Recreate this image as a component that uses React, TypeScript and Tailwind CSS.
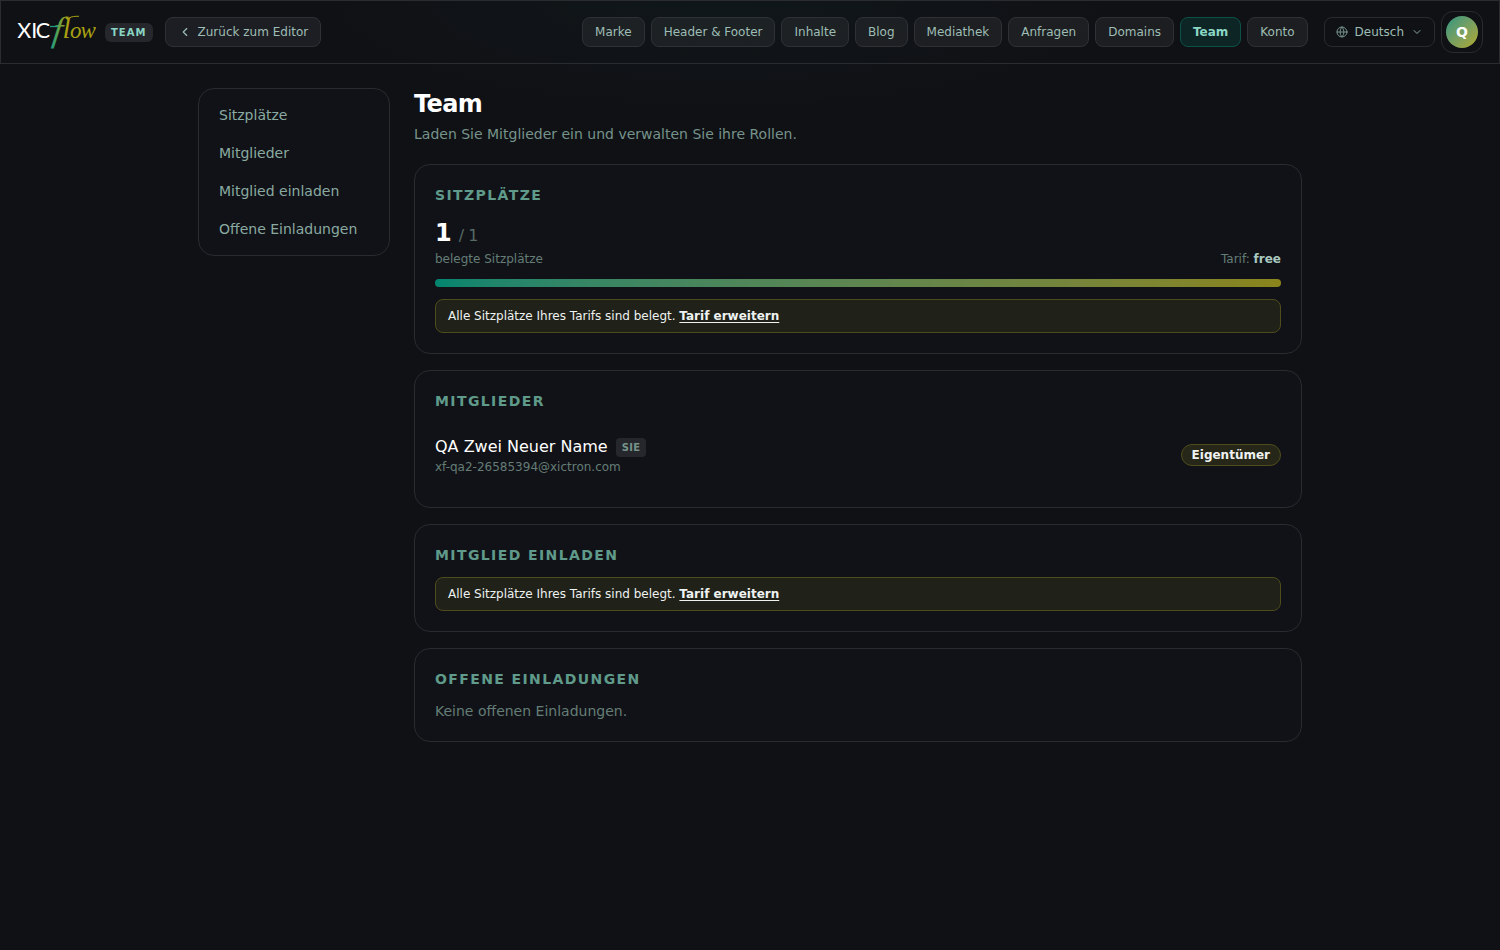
import type { ReactNode } from "react"
import { ChevronDown, ChevronLeft, Globe } from "lucide-react"

const navItems = [
  "Marke",
  "Header & Footer",
  "Inhalte",
  "Blog",
  "Mediathek",
  "Anfragen",
  "Domains",
  "Team",
  "Konto",
]

const sections = ["Sitzplätze", "Mitglieder", "Mitglied einladen", "Offene Einladungen"]

function Logo() {
  return (
    <svg width="80" height="34" viewBox="0 0 80 34" aria-label="XICflow" className="shrink-0 overflow-visible">
      <defs>
        <linearGradient id="flow" gradientUnits="userSpaceOnUse" x1="-3" y1="-4" x2="17" y2="-10">
          <stop offset="0" stopColor="#1f9d80" />
          <stop offset="0.5" stopColor="#5fa24a" />
          <stop offset="1" stopColor="#a8a012" />
        </linearGradient>
      </defs>
      <text x="1.3 15.3 19.7" y="23" fontFamily="Lato, sans-serif" fontSize="21.500" fill="#ffffff">
        XIC
      </text>
      <g fontFamily="'Liberation Serif', serif" fontStyle="italic">
        <text transform="translate(35.5 25.5) skewX(-8)" fontSize="35" fill="url(#flow)">
          f
        </text>
        <text x="46.500 54 64.500" y="23" fill="#a8a012">
          <tspan fontSize="29">l</tspan>
          <tspan fontSize="23">ow</tspan>
        </text>
      </g>
      {/* crossbar of the f runs back to the C, the swash reaches over the l */}
      <path d="M34 11.500H42" stroke="#1f9d80" strokeWidth="1.300" />
      <path d="M53 3C55.500 1.500 59 1.200 63 1.300" fill="none" stroke="#a8a012" strokeWidth="1" />
    </svg>
  )
}

function Card({ title, children }: { title: string; children: ReactNode }) {
  return (
    <section className="rounded-2xl border border-[#2a2b2f] bg-[#111217] p-5">
      <h2 className="mb-3 text-sm font-bold uppercase tracking-[1.4px] text-[#5f9a8a]">{title}</h2>
      {children}
    </section>
  )
}

function SeatsNotice() {
  return (
    <div className="rounded-lg border border-[#4f4c1c] bg-[#202118] px-3 py-2 text-xs text-[#eef2f1]">
      Alle Sitzplätze Ihres Tarifs sind belegt.{" "}
      <a href="#" className="font-bold underline underline-offset-2">
        Tarif erweitern
      </a>
    </div>
  )
}

function Header() {
  return (
    <header className="flex h-16 items-center justify-between border border-[#2b2c30] pl-[15px] pr-4">
      <div className="flex items-center">
        <Logo />
        <span className="ml-[9px] rounded-md bg-[#26272c] px-1.5 py-0.5 text-[10px] font-bold leading-[15px] tracking-[1.05px] text-[#8ad6c4]">
          TEAM
        </span>
        <button className="ml-3 flex items-center gap-1.5 rounded-lg border border-[#303136] bg-[#1d1e23] px-3 py-1.5 text-xs text-[#9dbdb4]">
          <ChevronLeft size={14} />
          Zurück zum Editor
        </button>
      </div>
      <div className="flex items-center">
        <nav className="flex gap-1.5">
          {navItems.map((item) => (
            <button
              key={item}
              className={
                item === "Team"
                  ? "rounded-lg border border-[#0b5148] bg-[#0e2526] px-3 py-1.5 text-xs font-bold text-[#8ad6c4]"
                  : "rounded-lg border border-[#303136] bg-[#fff]/[0.055] px-3 py-1.5 text-xs text-[#9dbdb4]"
              }
            >
              {item}
            </button>
          ))}
        </nav>
        <button className="ml-4 flex items-center rounded-lg border border-[#2a2b2f] px-[11px] py-1.5 text-xs text-[#9dbdb4]">
          <Globe size={12} strokeWidth={2} className="mr-[7px] text-[#76938b]" />
          Deutsch
          <ChevronDown size={12} strokeWidth={2} className="ml-[7px] text-[#8aa79f]" />
        </button>
        <button className="ml-1.5 rounded-xl border border-[#2a2b2f] p-1">
          <span className="flex size-8 items-center justify-center rounded-full bg-linear-to-br from-[#219581] to-[#b0a824] text-sm font-bold text-white">
            Q
          </span>
        </button>
      </div>
    </header>
  )
}

export default function App() {
  return (
    <div className="min-h-[950px] bg-[#101115] bg-[radial-gradient(ellipse_400px_110px_at_720px_0px,rgba(0,133,111,0.05),transparent)] font-['DejaVu_Sans',sans-serif]">
      <Header />
      <div className="mx-auto flex w-[1104px] items-start gap-6 pt-6">
        <aside className="flex w-48 shrink-0 flex-col gap-0.5 rounded-2xl border border-[#2a2b2f] bg-[#111217] p-2">
          {sections.map((section) => (
            <a key={section} href="#" className="px-3 py-2 text-sm text-[#8aaaa1]">
              {section}
            </a>
          ))}
        </aside>

        <main className="flex-1">
          <h1 className="text-2xl font-bold tracking-tight text-white">Team</h1>
          <p className="mb-5 mt-1 text-sm text-[#76938b]">Laden Sie Mitglieder ein und verwalten Sie ihre Rollen.</p>

          <div className="flex flex-col gap-4">
            <Card title="Sitzplätze">
              <div className="flex items-end justify-between">
                <div>
                  <p className="text-2xl font-bold tracking-[-0.6px] text-white">
                    1 <span className="text-base font-normal tracking-[-0.6px] text-[#556a65]">/ 1</span>
                  </p>
                  <p className="mt-0.5 text-xs text-[#647d76]">belegte Sitzplätze</p>
                </div>
                <p className="text-xs text-[#647d76]">
                  Tarif: <span className="font-bold text-[#a9c9c0]">free</span>
                </p>
              </div>
              <div className="my-3 h-2 rounded-full bg-linear-to-r from-[#00856f] to-[#8a841a]" />
              <SeatsNotice />
            </Card>

            <Card title="Mitglieder">
              <div className="flex items-center justify-between py-3">
                <div>
                  <p className="flex items-center gap-2 text-base text-white">
                    QA Zwei Neuer Name
                    <span className="rounded-sm bg-[#26272c] px-1.5 py-0.5 text-[10px] font-bold leading-[15px] tracking-[0.25px] text-[#76938b]">
                      SIE
                    </span>
                  </p>
                  <p className="text-xs text-[#647d76]">xf-qa2-26585394@xictron.com</p>
                </div>
                <span className="rounded-full border border-[#4f4c1c] bg-[#262718] px-2.5 py-0.5 text-xs font-bold text-[#eef2f1]">
                  Eigentümer
                </span>
              </div>
            </Card>

            <Card title="Mitglied einladen">
              <SeatsNotice />
            </Card>

            <Card title="Offene Einladungen">
              <p className="text-sm text-[#647d76]">Keine offenen Einladungen.</p>
            </Card>
          </div>
        </main>
      </div>
    </div>
  )
}
